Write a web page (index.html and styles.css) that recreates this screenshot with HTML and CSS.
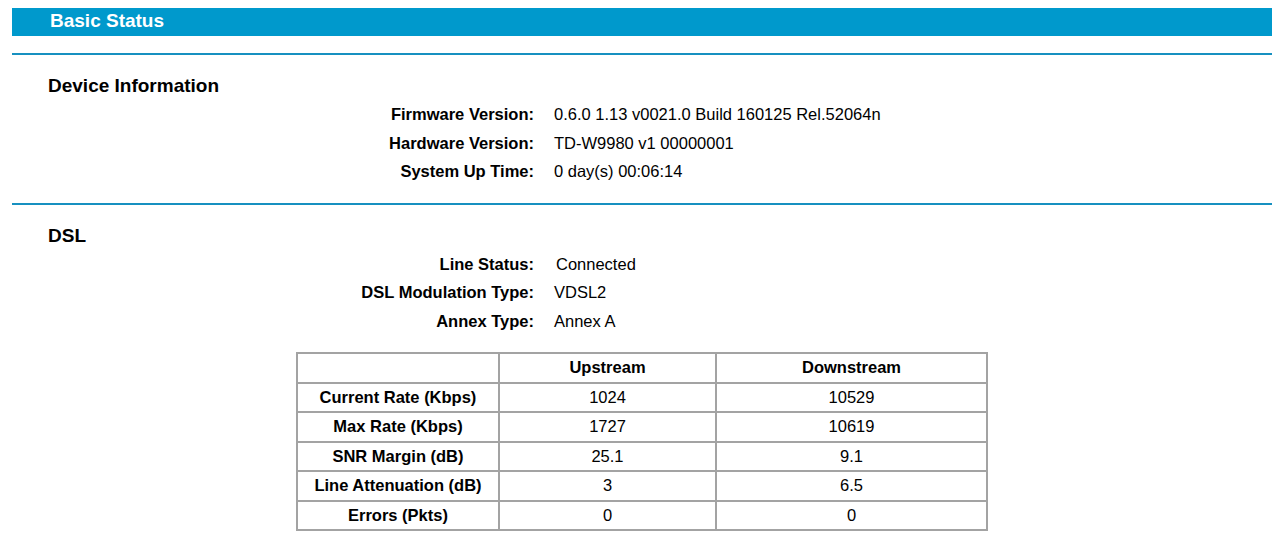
FILE: index.html
```html
<!DOCTYPE html>
<html lang="en">
<head>
    <meta charset="UTF-8">
    <title>Basic Status</title>
    <link rel="stylesheet" href="styles.css">
</head>
<body>
    <div id="page">
        <div id="titleBar">Basic Status</div>

        <div class="section">
            <h2>Device Information</h2>
            <div class="info-row"><div class="label">Firmware Version:</div><div class="value">0.6.0 1.13 v0021.0 Build 160125 Rel.52064n</div></div>
            <div class="info-row"><div class="label">Hardware Version:</div><div class="value">TD-W9980 v1 00000001</div></div>
            <div class="info-row"><div class="label">System Up Time:</div><div class="value">0 day(s) 00:06:14</div></div>
        </div>

        <div class="section">
            <h2>DSL</h2>
            <div class="info-row"><div class="label">Line Status:</div><div class="value connected">Connected</div></div>
            <div class="info-row"><div class="label">DSL Modulation Type:</div><div class="value">VDSL2</div></div>
            <div class="info-row"><div class="label">Annex Type:</div><div class="value">Annex A</div></div>

            <table id="dslTable">
                <tr class="head">
                    <td class="col-name"></td>
                    <td class="col-up">Upstream</td>
                    <td class="col-down">Downstream</td>
                </tr>
                <tr><th>Current Rate (Kbps)</th><td>1024</td><td>10529</td></tr>
                <tr><th>Max Rate (Kbps)</th><td>1727</td><td>10619</td></tr>
                <tr><th>SNR Margin (dB)</th><td>25.1</td><td>9.1</td></tr>
                <tr><th>Line Attenuation (dB)</th><td>3</td><td>6.5</td></tr>
                <tr><th>Errors (Pkts)</th><td>0</td><td>0</td></tr>
            </table>
        </div>
    </div>
</body>
</html>
```

FILE: styles.css
```css
body {
    margin: 0;
    background-color: #ffffff;
    color: #000000;
    font-family: "Liberation Sans", Arial, sans-serif;
    font-size: 16.5px;
}
#page {
    padding: 8px 8px 0 12px;
}
#titleBar {
    height: 28px;
    line-height: 25px;
    background-color: #0099cc;
    color: #ffffff;
    font-size: 19px;
    font-weight: bold;
    padding-left: 38px;
}
.section {
    border-top: 2px solid #1790c0;
    margin-top: 17px;
    padding-top: 20px;
}
.section h2 {
    margin: 0 0 3px 36px;
    font-size: 19px;
    line-height: 22px;
}
.info-row {
    display: flex;
    height: 28.5px;
    line-height: 28.5px;
}
.label {
    width: 522px;
    text-align: right;
    font-weight: bold;
}
.value {
    margin-left: 20px;
}
.value.connected {
    margin-left: 22px;
}
#dslTable {
    margin: 17px 0 0 284px;
    border-collapse: collapse;
    width: 692px;
}
#dslTable td, #dslTable th {
    border: 2px solid #a3a3a3;
    height: 27.5px;
    padding: 0;
    text-align: center;
    font-weight: normal;
}
#dslTable th, #dslTable .head td {
    font-weight: bold;
}
.col-name {
    width: 200px;
}
.col-up {
    width: 215px;
}
```
